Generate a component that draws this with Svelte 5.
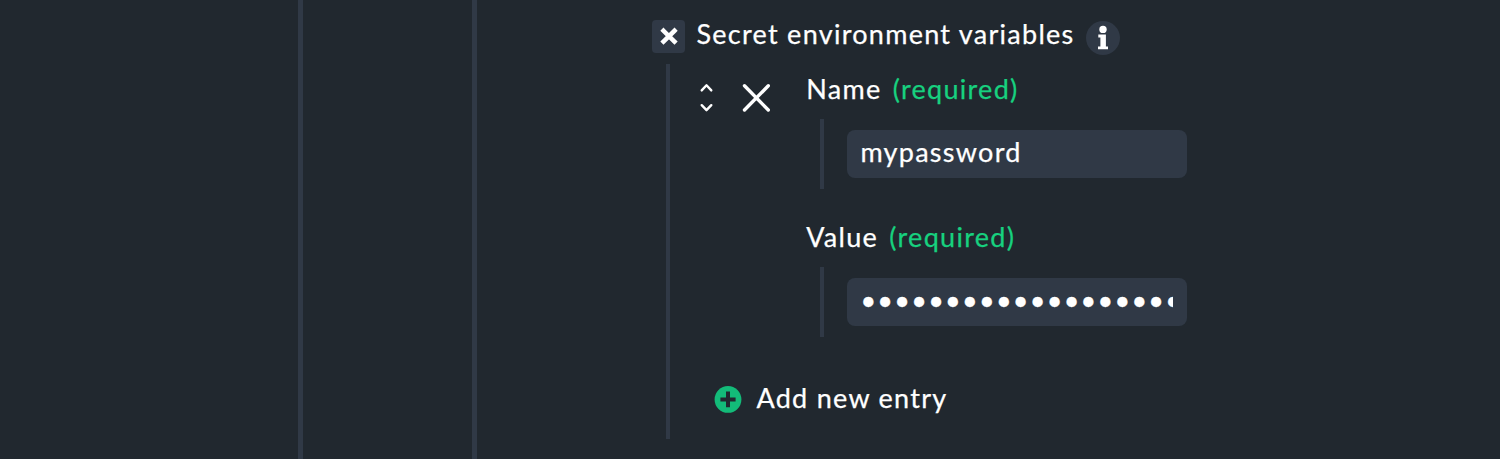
<script>
  let name = $state('mypassword');
  let value = $state('correct-horse-battery-staple');
</script>

<main class="page">
  <div class="rail first"></div>
  <div class="rail second"></div>
  <section class="content">
    <header class="heading">
      <button class="checkbox" aria-label="Toggle secret environment variables">
        <svg width="33" height="33" viewBox="0 0 33 33">
          <path d="M10.9 10.2 L23.1 22.2 M23.1 10.2 L10.9 22.2" stroke="#fff" stroke-width="5" stroke-linecap="square" stroke-linejoin="round" transform="translate(1.7 1.6) scale(.9)" />
        </svg>
      </button>
      <span class="title">Secret environment variables</span>
      <svg class="info" width="34" height="34" viewBox="0 0 34 34">
        <circle cx="17" cy="17" r="17" fill="#303946" />
        <circle cx="17" cy="8.4" r="3.7" fill="#fff" />
        <path d="M12.3 13.6 H19.9 V25.4 H22 V28.3 H12 V25.4 H14.4 V16.5 H12.3 Z" fill="#fff" />
      </svg>
    </header>

    <div class="group">
      <div class="entry">
        <svg class="sort" width="14" height="30" viewBox="0 0 14 30" fill="none" stroke="#fff" stroke-width="2.4" stroke-linecap="round" stroke-linejoin="round">
          <path d="M1.7 7.4 L6.5 2.3 L11.3 7.4 M1.7 22.2 L6.5 27.2 L11.3 22.2" />
        </svg>
        <svg class="remove" width="28" height="30" viewBox="0 0 28 30" stroke="#fff" stroke-width="3.4" stroke-linecap="round">
          <path d="M2.5 2.8 L26.3 27 M26.3 2.8 L2.5 27" />
        </svg>
        <div class="fields">
          <label class="field">
            <span class="label">Name <em>(required)</em></span>
            <span class="control"><input type="text" bind:value={name} /></span>
          </label>
          <label class="field">
            <span class="label">Value <em>(required)</em></span>
            <span class="control"><input type="password" bind:value={value} /></span>
          </label>
        </div>
      </div>
      <button class="add">
        <svg width="28" height="28" viewBox="0 0 28 28">
          <circle cx="14" cy="14.4" r="13.4" fill="#13bb79" />
          <path d="M14 6.6 V22.2 M6.4 14.4 H21.6" stroke="#21282f" stroke-width="4" />
        </svg>
        <span>Add new entry</span>
      </button>
    </div>
  </section>
</main>

<style>
  :global(body) {
    margin: 0;
    background: #21282f;
  }
  .page {
    display: flex;
    height: 459px;
    overflow: hidden;
    background: #21282f;
    color: #fff;
    font: 27px/34px Lato, sans-serif;
    letter-spacing: 1.28px;
    -webkit-text-stroke: 0.25px currentColor;
  }
  .rail {
    box-sizing: border-box;
    flex: none;
    border-right: 5px solid #303946;
  }
  .first {
    width: 303px;
  }
  .second {
    width: 174px;
  }
  .content {
    padding: 20px 0 0 175px;
  }
  button {
    border: 0;
    padding: 0;
    color: inherit;
    font: inherit;
    letter-spacing: inherit;
  }
  svg {
    display: block;
    flex: none;
  }
  .heading {
    display: flex;
    height: 44px;
    align-items: flex-start;
  }
  .checkbox {
    width: 33px;
    height: 33px;
    border-radius: 4px;
    background: #303946;
  }
  .title {
    width: 389.6px;
    margin: -3px 0 0 11.4px;
    white-space: nowrap;
  }
  .info {
    margin-top: 1px;
  }
  .group {
    box-sizing: border-box;
    height: 375px;
    margin-left: 14px;
    border-left: 4px solid #303946;
    padding-left: 30px;
  }
  .entry {
    display: flex;
    height: 321px;
  }
  .sort {
    margin-top: 19px;
  }
  .remove {
    margin: 19px 0 0 28px;
  }
  .fields {
    margin-left: 36px;
  }
  .field {
    display: block;
    height: 148px;
  }
  .label {
    display: block;
    height: 47px;
    padding: 8px 0 0 0.3px;
    white-space: nowrap;
  }
  em {
    margin-left: 3px;
    color: #17d17f;
    font-style: normal;
  }
  .control {
    display: flex;
    align-items: center;
    height: 70px;
    margin-left: 14px;
    border-left: 4px solid #303946;
    padding-left: 23px;
  }
  input {
    box-sizing: border-box;
    width: 340px;
    height: 48px;
    border: 0;
    border-radius: 8px;
    padding: 0 14px 5px 13.4px;
    background: #303946;
    color: inherit;
    font: inherit;
    letter-spacing: inherit;
    outline: 0;
  }
  .add {
    display: flex;
    margin-left: 14px;
    background: none;
  }
  .add span {
    margin: -4px 0 0 14.4px;
  }
</style>
